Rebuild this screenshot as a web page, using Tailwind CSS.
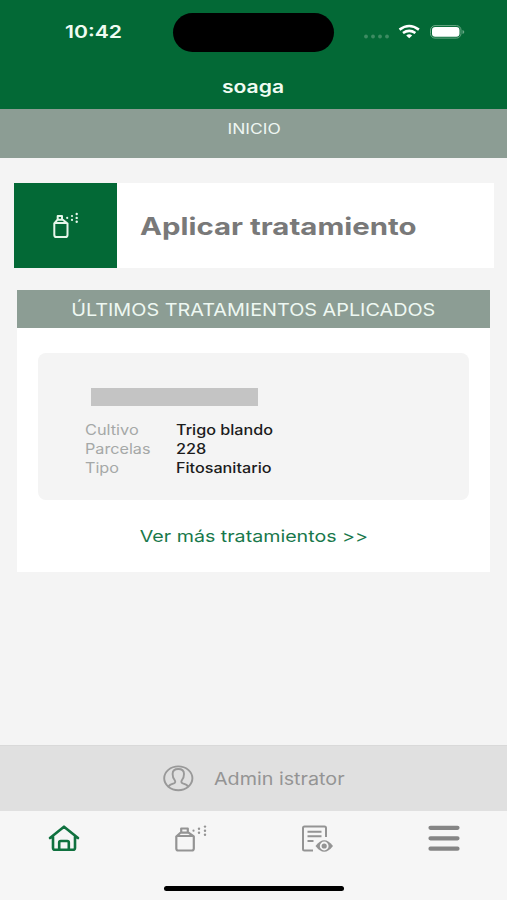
<!DOCTYPE html>
<html lang="es">
<head>
<meta charset="utf-8">
<title>soaga</title>
<script src="https://cdn.jsdelivr.net/npm/@tailwindcss/browser@4"></script>
</head>
<body class="w-[507px] h-[900px] overflow-hidden bg-[#f4f4f4] font-['Inter','Liberation_Sans',sans-serif] flex flex-col whitespace-nowrap">
<header class="h-[109px] bg-[#036936] text-[#f0fbf2] flex flex-col shrink-0">
  <div class="h-[64px] flex items-center pl-[65px]">
    <div class="w-[108px]"><span class="inline-block origin-left scale-x-[1.21] text-[17.5px] font-semibold">10:42</span></div>
    <div class="w-[161px] h-[39px] rounded-full bg-black"></div>
    <svg class="ml-[29px]" width="103" height="20" viewBox="0 0 103 20">
      <g fill="#3d8b62"><circle cx="3" cy="14.5" r="1.9"/><circle cx="10" cy="14.5" r="1.9"/><circle cx="17" cy="14.5" r="1.9"/><circle cx="24" cy="14.5" r="1.9"/></g>
      <g fill="none" stroke="#fff" stroke-width="2.6"><path d="M36.500 7.600Q46.200 .4 55.900 7.600"/><path d="M40 11Q46.200 6.600 52.400 11"/></g>
      <path d="M43.200 13.400Q46.200 11.200 49.200 13.400L46.200 16.200Z" fill="#fff"/>
      <rect x="67.500" y="3.600" width="30.500" height="12.500" rx="4.500" fill="none" stroke="#69a885"/>
      <rect x="69" y="5" width="27.500" height="9.700" rx="3.200" fill="#fff"/>
      <path d="M99.500 8v4q1.800-.5 1.800-2t-1.800-2Z" fill="#69a885"/>
    </svg>
  </div>
  <div class="h-[45px] flex items-center justify-center pt-[2px]"><span class="scale-x-[1.24] text-[17px] font-semibold">soaga</span></div>
</header>
<div class="h-[49px] shrink-0 bg-[#8c9d94] text-[#eef6f1] flex justify-center pt-[10px] pl-px"><span class="h-[20px] leading-[20px] scale-x-[1.2] text-[14.5px]">INICIO</span></div>
<main class="flex-1 pt-[25px]">
  <section class="ml-[14px] w-[480px] h-[85px] bg-white flex">
    <div class="w-[103px] bg-[#036936] flex items-center justify-center">
      <svg class="text-[#e6f6ea]" width="28" height="30" viewBox="0 0 28 30" fill="none" stroke="currentColor" stroke-width="2">
        <path d="M5.700 9V5h4.300v4M5.500 8.700 2.300 12.500V24q0 2.100 2 2.100h9.200q2 0 2-2.100V12.500L10.800 8.700ZM3 12h12" stroke-linejoin="round"/>
        <g fill="currentColor" stroke="none"><circle cx="15.200" cy="6.900" r="1.100"/><circle cx="20" cy="5" r="1.100"/><circle cx="20" cy="8.900" r="1.100"/><circle cx="24.700" cy="3" r="1.200"/><circle cx="24.700" cy="6.900" r="1.200"/><circle cx="24.700" cy="10.800" r="1.200"/></g>
      </svg>
    </div>
    <div class="pl-[23px] pt-[2px] flex items-center"><span class="origin-left scale-x-[1.225] text-[24px] font-bold text-[#797979]">Aplicar tratamiento</span></div>
  </section>
  <section class="mt-[22px] ml-[17px] w-[473px] h-[282px] bg-white flex flex-col items-center">
    <h2 class="w-full h-[38px] pt-[3px] bg-[#8c9d94] text-[#eef8f2] flex items-center justify-center"><span class="scale-x-[1.165] text-[17px]">ÚLTIMOS TRATAMIENTOS APLICADOS</span></h2>
    <div class="mt-[25px] w-[431px] h-[147px] rounded-[8px] bg-[#f4f4f4] pt-[35px] pl-[47px]">
      <div class="ml-[6px] w-[167px] h-[18px] bg-[#c4c4c4]"></div>
      <dl class="mt-[14px] grid grid-cols-[91px_1fr] text-[14px] leading-[19px]">
        <dt class="text-[#a5a8a7]"><span class="inline-block origin-left scale-x-[1.165]">Cultivo</span></dt><dd class="text-[#1c1c1c] font-medium"><span class="inline-block origin-left scale-x-[1.155]">Trigo blando</span></dd>
        <dt class="text-[#a5a8a7]"><span class="inline-block origin-left scale-x-[1.155]">Parcelas</span></dt><dd class="text-[#1c1c1c] font-medium"><span class="inline-block origin-left scale-x-[1.165]">228</span></dd>
        <dt class="text-[#a5a8a7]"><span class="inline-block origin-left scale-x-[1.155]">Tipo</span></dt><dd class="text-[#1c1c1c] font-medium"><span class="inline-block origin-left scale-x-[1.155]">Fitosanitario</span></dd>
      </dl>
    </div>
    <a class="mt-[24px] h-[24px] leading-[24px] text-[16.5px] text-[#18784b]"><span class="inline-block scale-x-[1.19]">Ver más tratamientos &gt;&gt;</span></a>
  </section>
</main>
<div class="h-[66px] shrink-0 bg-[#e0e0e0] border-t border-[#d9d9d9] flex items-center pl-[163px]">
  <svg width="31" height="27" viewBox="0 0 31 27" fill="none" stroke="#999" stroke-width="1.9"><ellipse cx="15.300" cy="13.300" rx="14.100" ry="11.900"/><path d="M5.500 21.500q1-2 5.300-3.100 2.400-.9.800-3.400Q9.600 12.500 9.600 9q0-5 5.700-5t5.700 5q0 3.500-2 6-1.600 2.500.8 3.400 4.300 1.100 5.300 3.100"/></svg>
  <span class="ml-[20px] mt-[3px] origin-left scale-x-[1.16] text-[17px] text-[#949494]">Admin istrator</span>
</div>
<nav class="h-[89px] shrink-0 bg-[#f6f6f6] flex flex-col">
  <div class="h-[56px] flex items-center pb-[3px]">
    <svg class="ml-[48px]" width="32" height="30" viewBox="0 0 32 30" fill="none" stroke="#10713f" stroke-width="2.600" stroke-linejoin="round" stroke-linecap="round"><path d="M2 15 16 3.700l14 11.300M5 13.500V25q0 1.800 2 1.800h18q2 0 2-1.800V13.500M11.200 26.500v-7q0-1.500 1.500-1.500h6.600q1.500 0 1.500 1.500v7"/></svg>
    <svg class="ml-[94px]" width="33" height="30" viewBox="0 0 33 30" fill="none" stroke="#949494" stroke-width="2.200"><path d="M7.200 10V5.500h6.600V10M6.500 9.700 2.300 13.500V25.500q0 2 2 2h13.500q2 0 2-2V13.500L14.500 9.700ZM3 13h16" stroke-linejoin="round"/><g fill="#949494" stroke="none"><circle cx="19.500" cy="7.700" r="1.100"/><circle cx="25" cy="5.700" r="1.200"/><circle cx="25" cy="9.700" r="1.200"/><circle cx="31" cy="3.600" r="1.200"/><circle cx="31" cy="7.700" r="1.200"/><circle cx="31" cy="11.700" r="1.200"/></g></svg>
    <svg class="ml-[94px]" width="32" height="30" viewBox="0 0 32 30" fill="none" stroke="#949494" stroke-width="2"><path d="M12 27.500H3.500q-1.500 0-1.500-1.500V5q0-1.500 1.500-1.500h20Q25 3.500 25 5v9M6.500 8.800h14M6.500 13.300h14M6.500 18h6"/><path d="M14.500 23Q23.200 11.500 32 23 23.200 34.500 14.500 23Z" fill="#949494" stroke="none"/><circle cx="23.200" cy="23" r="3.500" stroke="#f6f6f6" stroke-width="1.800"/></svg>
    <svg class="ml-[95px]" width="32" height="30" viewBox="0 0 32 30" stroke="#858585" stroke-width="4.200" stroke-linecap="round"><path d="M2.500 4.800h27M2.500 15.300h27M2.500 25.700h27"/></svg>
  </div>
  <div class="mt-[19px] ml-[164px] w-[180px] h-[5px] rounded-full bg-black"></div>
</nav>
</body>
</html>
